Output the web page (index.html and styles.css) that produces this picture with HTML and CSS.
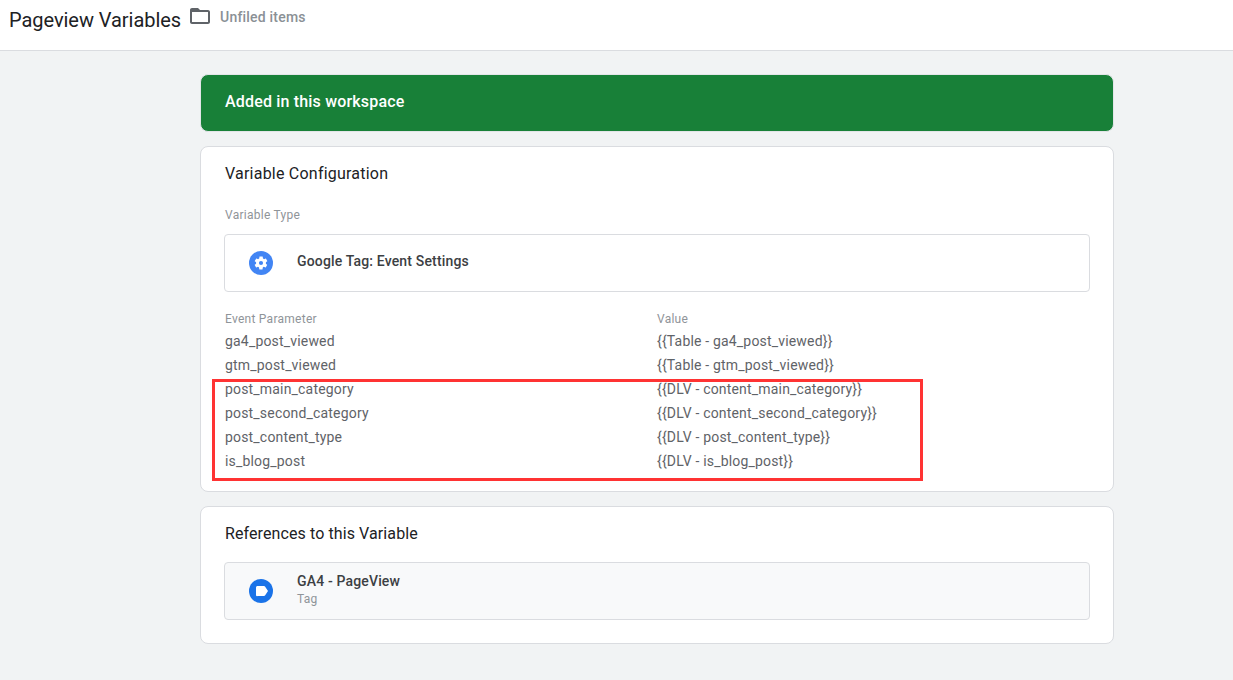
FILE: index.html
```html
<!DOCTYPE html>
<html lang="en">
<head>
<meta charset="utf-8">
<title>Pageview Variables</title>
<link rel="stylesheet" href="styles.css">
</head>
<body>
<header class="topbar">
  <h1 class="title">Pageview Variables</h1>
  <svg class="folder" width="24" height="24" viewBox="0 0 24 24"><path fill="#5f6368" d="M20 6h-8l-2-2H4c-1.1 0-1.99.9-1.99 2L2 18c0 1.1.9 2 2 2h16c1.1 0 2-.9 2-2V8c0-1.1-.9-2-2-2zm0 12H4V8h16v10z"/></svg>
  <span class="folder-name">Unfiled items</span>
</header>
<main class="content">
  <section class="banner">Added in this workspace</section>
  <section class="card config">
    <h2 class="card-title">Variable Configuration</h2>
    <div class="label type-label">Variable Type</div>
    <div class="type-box">
      <svg class="icon" width="24" height="24" viewBox="0 0 24 24"><circle cx="12" cy="12" r="12" fill="#4285f4"/><path transform="translate(1.2 1.2) scale(.9)" fill="#fff" d="M17.4 12.7c0-.2.1-.5.1-.7s0-.5-.1-.7l1.5-1.2c.1-.1.2-.3.1-.4l-1.4-2.5c-.1-.2-.3-.2-.4-.2l-1.8.7c-.4-.3-.8-.5-1.2-.7l-.3-1.9c0-.2-.2-.3-.4-.3h-2.9c-.2 0-.3.1-.3.3l-.3 1.9c-.4.2-.8.4-1.2.7l-1.8-.7c-.2-.1-.3 0-.4.2L5 9.7c-.1.1 0 .3.1.4l1.5 1.2c0 .2-.1.5-.1.7s0 .5.1.7l-1.500 1.2c-.1.1-.2.3-.1.4l1.400 2.500c.1.2.3.2.4.2l1.800-.7c.4.3.8.5 1.200.7l.3 1.900c0 .2.2.3.3.3h2.900c.2 0 .3-.1.4-.3l.3-1.900c.4-.2.8-.4 1.200-.7l1.800.7c.2.1.3 0 .4-.2l1.400-2.500c.1-.1 0-.3-.1-.4zM12 14.300a2.300 2.300 0 1 1 0-4.600 2.300 2.300 0 0 1 0 4.600z"/></svg>
      <span class="item-name type-name">Google Tag: Event Settings</span>
    </div>
    <div class="params">
      <div class="label">Event Parameter</div><div class="label">Value</div>
      <div class="cell">ga4_post_viewed</div><div class="cell">{{Table - ga4_post_viewed}}</div>
      <div class="cell">gtm_post_viewed</div><div class="cell">{{Table - gtm_post_viewed}}</div>
      <div class="cell">post_main_category</div><div class="cell">{{DLV - content_main_category}}</div>
      <div class="cell">post_second_category</div><div class="cell">{{DLV - content_second_category}}</div>
      <div class="cell">post_content_type</div><div class="cell">{{DLV - post_content_type}}</div>
      <div class="cell">is_blog_post</div><div class="cell">{{DLV - is_blog_post}}</div>
    </div>
    <div class="highlight"></div>
  </section>
  <section class="card refs">
    <h2 class="card-title refs-title">References to this Variable</h2>
    <div class="ref-box">
      <svg class="icon" width="24" height="24" viewBox="0 0 24 24"><circle cx="12" cy="12" r="12" fill="#1a73e8"/><path fill="#fff" d="M8.500 7H15c.4 0 .8.2 1 .5l3 4.500-3 4.500c-.2.3-.6.500-1 .500H8.500C7.700 17.500 7 16.800 7 16V8.500C7 7.700 7.700 7 8.500 7z"/></svg>
      <div class="ref-text">
        <div class="item-name">GA4 - PageView</div>
        <div class="ref-kind">Tag</div>
      </div>
    </div>
  </section>
</main>
</body>
</html>
```
FILE: styles.css
```css
* { box-sizing: border-box; }
html, body { margin: 0; height: 100%; }
body {
  background: #f1f3f4;
  font-family: Roboto, "Liberation Sans", sans-serif;
  color: #202124;
  overflow: hidden;
}
.topbar {
  height: 51px;
  background: #fff;
  border-bottom: 1px solid #dadce0;
  display: flex;
  align-items: flex-start;
  padding-left: 9px;
}
.title {
  margin: 8px 0 0;
  font-size: 20px;
  line-height: 24px;
  font-weight: 400;
  letter-spacing: -0.05px;
}
.folder { margin: 4px 0 0 7px; }
.folder-name {
  margin: 8px 0 0 8px;
  font-size: 14px;
  line-height: 18px;
  font-weight: 500;
  letter-spacing: 0.2px;
  color: #8a9095;
}
.content {
  width: 914px;
  margin: 23px 0 0 200px;
  display: flex;
  flex-direction: column;
}
.banner {
  height: 58px;
  background: #188038;
  border: 1px solid #e3e5e8;
  border-radius: 8px;
  color: #fff;
  font-size: 16px;
  font-weight: 500;
  line-height: 54px;
  letter-spacing: 0.18px;
  padding-left: 24px;
}
.card {
  position: relative;
  background: #fff;
  border: 1px solid #dadce0;
  border-radius: 8px;
  padding: 0 23px;
}
.config { height: 346px; margin-top: 14px; }
.refs { height: 138px; margin-top: 14px; }
.card-title {
  margin: 17px 0 0 1px;
  font-size: 16px;
  line-height: 20px;
  font-weight: 400;
  letter-spacing: 0.22px;
}
.refs-title { letter-spacing: 0.1px; }
.label {
  font-size: 12px;
  line-height: 16px;
  letter-spacing: 0.26px;
  color: #8f9499;
}
.type-label { margin: 23px 0 0 1px; }
.type-box, .ref-box {
  display: flex;
  align-items: center;
  height: 58px;
  border: 1px solid #dadce0;
  border-radius: 4px;
  padding-left: 24px;
}
.type-box { margin-top: 11px; }
.ref-box { margin-top: 18px; background: #f8f9fa; }
.icon { flex: none; margin-right: 24px; }
.item-name {
  font-size: 14px;
  line-height: 18px;
  font-weight: 500;
  letter-spacing: 0.16px;
  color: #3c4043;
}
.type-name { padding-bottom: 5px; }
.ref-text { padding-bottom: 2px; }
.ref-text .item-name { margin-top: -1px; padding-bottom: 1px; }
.ref-kind {
  font-size: 12px;
  line-height: 16px;
  letter-spacing: 0.26px;
  color: #8f9499;
}
.params {
  display: grid;
  grid-template-columns: 432px 1fr;
  margin: 19px 0 0 1px;
}
.params .label { height: 18px; }
.cell {
  font-size: 14px;
  line-height: 24px;
  letter-spacing: 0.18px;
  color: #5f6368;
}
.highlight {
  position: absolute;
  left: 11px;
  top: 232px;
  width: 711px;
  height: 102px;
  border: 3px solid #ff3333;
}
```
